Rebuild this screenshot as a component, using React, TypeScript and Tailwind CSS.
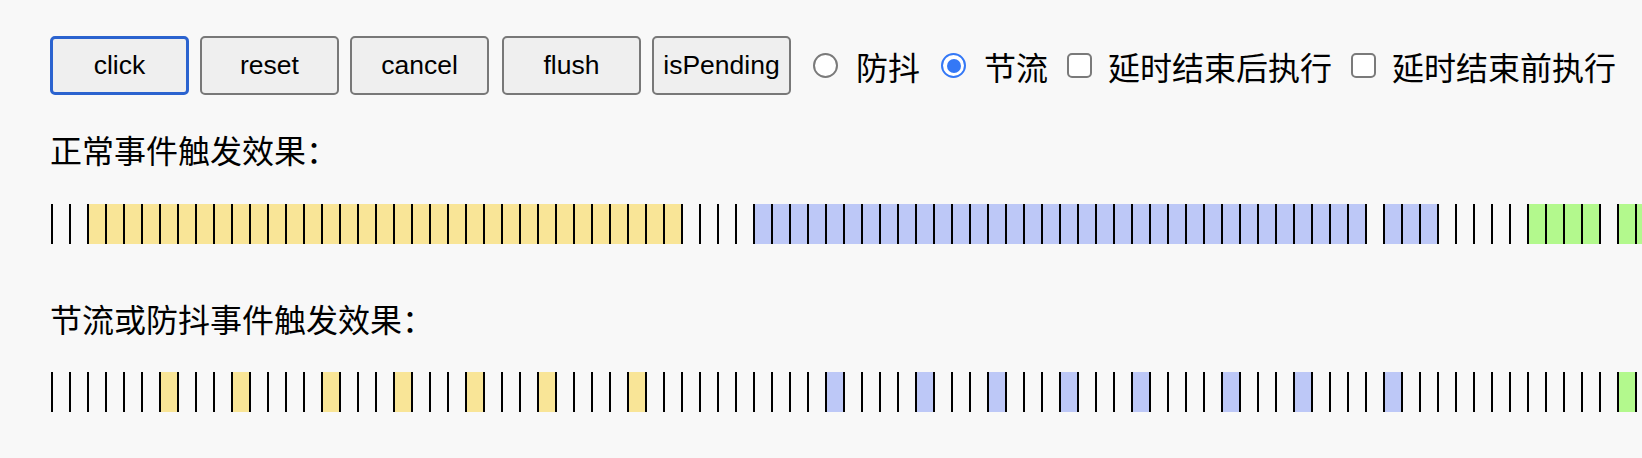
import React from 'react';

const CELLS = 90;

const normalRow = (i: number) => {
  if (i >= 2 && i <= 34) return 'y';
  if ((i >= 39 && i <= 72) || (i >= 74 && i <= 76)) return 'b';
  if ((i >= 82 && i <= 85) || i >= 87) return 'g';
  return '';
};

const throttleRow = (i: number) => {
  if ([6, 10, 15, 19, 23, 27, 32].includes(i)) return 'y';
  if ([43, 48, 52, 56, 60, 65, 69, 74].includes(i)) return 'b';
  if (i === 87) return 'g';
  return '';
};

const fill: Record<string, string> = {
  y: 'bg-[#f9e597]',
  b: 'bg-[#bdc8f7]',
  g: 'bg-[#b3f98d]',
  '': 'bg-transparent',
};

function Bars({ pick }: { pick: (i: number) => string }) {
  return (
    <div className="flex ml-[1px]">
      {Array.from({ length: CELLS }).map((_, i) => (
        <div
          key={i}
          className={`w-[18px] h-[40px] shrink-0 border-l-2 border-black ${fill[pick(i)]}`}
        />
      ))}
    </div>
  );
}

function Radio({ checked }: { checked?: boolean }) {
  if (checked) {
    return (
      <span className="w-[25px] h-[25px] shrink-0 rounded-full border-2 border-[#3478f6] bg-white flex items-center justify-center">
        <span className="w-[14px] h-[14px] rounded-full bg-[#3478f6]" />
      </span>
    );
  }
  return <span className="w-[25px] h-[25px] shrink-0 rounded-full border-2 border-[#7a7a7a] bg-white" />;
}

function Checkbox() {
  return <span className="w-[25px] h-[25px] shrink-0 rounded-[5px] border-2 border-[#7a7a7a] bg-white" />;
}

export default function App() {
  const buttons = ['click', 'reset', 'cancel', 'flush', 'isPending'];
  const cjk = { fontFamily: '"Noto Sans CJK SC", "Noto Sans", sans-serif' };

  return (
    <div className="w-full min-h-screen overflow-hidden bg-[#f8f8f8] text-black px-[50px] pt-[36px]" style={cjk}>
      <div className="flex items-center whitespace-nowrap">
        <div className="flex shrink-0 gap-[11px]">
          {buttons.map((b, i) => (
            <button
              key={b}
              className={`w-[139px] h-[59px] shrink-0 rounded-[5px] bg-[#efefef] text-[26.5px] text-black flex items-center justify-center ${
                i === 0 ? 'border-[3px] border-[#2b63cf]' : 'border-2 border-[#787878]'
              } ${i === 3 ? 'ml-[2px]' : ''}`}
              style={{ fontFamily: '"Liberation Sans", Arial, sans-serif' }}
            >
              {b}
            </button>
          ))}
        </div>
        <label className="flex shrink-0 items-center gap-[18px] ml-[22px] text-[32px] leading-[32px]">
          <Radio />
          <span>防抖</span>
        </label>
        <label className="flex shrink-0 items-center gap-[18px] ml-[21px] text-[32px] leading-[32px]">
          <Radio checked />
          <span>节流</span>
        </label>
        <label className="flex shrink-0 items-center gap-[16px] ml-[19px] text-[32px] leading-[32px]">
          <Checkbox />
          <span>延时结束后执行</span>
        </label>
        <label className="flex shrink-0 items-center gap-[16px] ml-[19px] text-[32px] leading-[32px]">
          <Checkbox />
          <span>延时结束前执行</span>
        </label>
      </div>

      <div className="mt-[38px] text-[32px] leading-[32px] whitespace-nowrap">正常事件触发效果：</div>
      <div className="mt-[39px]">
        <Bars pick={normalRow} />
      </div>

      <div className="mt-[58px] text-[32px] leading-[32px] whitespace-nowrap">节流或防抖事件触发效果：</div>
      <div className="mt-[38px]">
        <Bars pick={throttleRow} />
      </div>
    </div>
  );
}
